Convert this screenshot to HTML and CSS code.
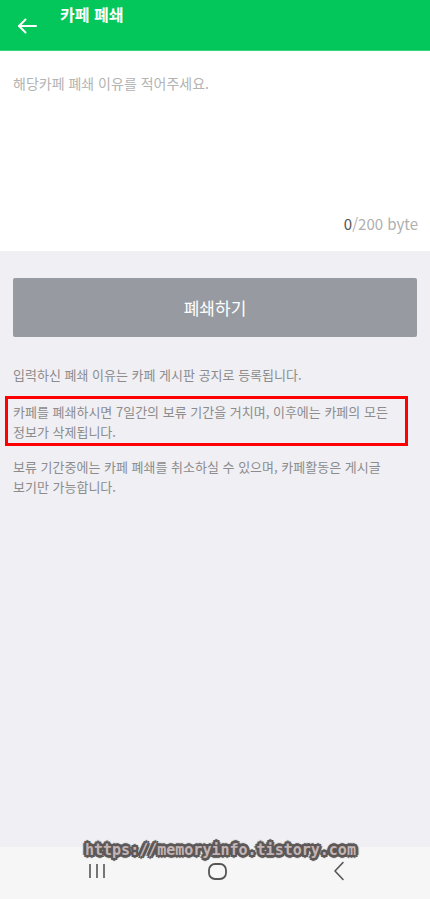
FILE: index.html
```html
<!DOCTYPE html>
<html lang="ko">

<head>
    <meta charset="UTF-8">
    <meta name="viewport" content="width=device-width, initial-scale=1.0">
    <title>카페 폐쇄</title>
    <link rel="stylesheet" href="styles.css">
</head>

<body>
    <div class="screen">
        <header class="topbar">
            <button class="back-btn" aria-label="뒤로">
                <svg width="20" height="16" viewBox="0 0 20 16" fill="none" stroke="#fff" stroke-width="2" stroke-linecap="round" stroke-linejoin="round">
                    <path d="M19 8H2"/>
                    <path d="M8.5 1.5L2 8l6.5 6.5"/>
                </svg>
            </button>
            <h1 class="title">카페 폐쇄</h1>
        </header>

        <section class="reason-box">
            <p class="placeholder">해당카페 폐쇄 이유를 적어주세요.</p>
            <div class="counter"><span class="count-now">0</span>/200 byte</div>
        </section>

        <main class="content">
            <button class="close-btn">폐쇄하기</button>

            <p class="notice">입력하신 폐쇄 이유는 카페 게시판 공지로 등록됩니다.</p>
            <p class="notice boxed">카페를 폐쇄하시면 7일간의 보류 기간을 거치며, 이후에는 카페의 모든<br>정보가 삭제됩니다.</p>
            <p class="notice spaced">보류 기간중에는 카페 폐쇄를 취소하실 수 있으며, 카페활동은 게시글<br>보기만 가능합니다.</p>
        </main>

        <nav class="navbar">
            <span class="nav-icon">
                <svg width="18" height="16" viewBox="0 0 18 16" fill="none" stroke="#555" stroke-width="1.6">
                    <path d="M2 1v14M9 1v14M16 1v14"/>
                </svg>
            </span>
            <span class="nav-icon">
                <svg width="19" height="17" viewBox="0 0 19 17" fill="none" stroke="#555" stroke-width="1.8">
                    <rect x="1" y="1" width="17" height="15" rx="6"/>
                </svg>
            </span>
            <span class="nav-icon">
                <svg width="12" height="20" viewBox="0 0 12 20" fill="none" stroke="#555" stroke-width="1.6" stroke-linecap="round" stroke-linejoin="round">
                    <path d="M10 1.5L2 10l8 8.5"/>
                </svg>
            </span>
        </nav>

        <div class="watermark">https://memoryinfo.tistory.com</div>
    </div>
</body>

</html>
```

FILE: styles.css
```css
* {
    box-sizing: border-box;
}

body {
    margin: 0;
    font-family: "Noto Sans CJK KR", "Noto Sans", sans-serif;
    background-color: #efeff4;
}

.screen {
    position: relative;
    height: 899px;
    display: flex;
    flex-direction: column;
}

.topbar {
    height: 51px;
    background-color: #03c75a;
    display: flex;
    align-items: flex-start;
    border-bottom: 1px solid #35d57c;
}

.back-btn {
    width: 52px;
    height: 50px;
    padding: 1px 0 0 1px;
    background: none;
    border: none;
    display: flex;
    align-items: center;
    justify-content: center;
}

.title {
    margin: 0;
    padding-top: 3px;
    color: #fff;
    font-size: 16px;
    font-weight: 700;
    line-height: 22px;
    margin-left: 8px;
}

.reason-box {
    height: 200px;
    background-color: #fff;
    padding: 21px 12px 16px 13px;
    display: flex;
    flex-direction: column;
    justify-content: space-between;
}

.placeholder {
    margin: 0;
    color: #b3b3b3;
    font-size: 14px;
    line-height: 22px;
}

.counter {
    text-align: right;
    color: #b0b0b0;
    font-size: 15px;
    line-height: 22px;
}

.count-now {
    color: #555;
}

.content {
    flex: 1;
    padding: 27px 13px 0;
}

.close-btn {
    display: block;
    width: 100%;
    height: 59px;
    background-color: #979ba1;
    color: #fff;
    border: none;
    border-radius: 2px;
    font-family: inherit;
    font-size: 17px;
}

.notice {
    margin: 0;
    color: #8c8c8c;
    font-size: 13px;
    line-height: 20px;
}

.content .notice:first-of-type {
    margin-top: 28px;
}

.boxed {
    margin: 11px 9px 0 -8px;
    border: 3px solid #ff0000;
    padding: 3px 5px 1px 5px;
}

.spaced {
    margin-top: 11px;
}

.navbar {
    height: 52px;
    background-color: #f6f6f6;
    display: flex;
    align-items: center;
    justify-content: space-around;
    padding: 0 30px 4px 36px;
}

.nav-icon {
    display: flex;
    align-items: center;
    justify-content: center;
    width: 40px;
}

.watermark {
    position: absolute;
    left: 85px;
    top: 838px;
    font-family: "DejaVu Sans Mono", monospace;
    font-weight: 700;
    font-size: 15px;
    line-height: 24px;
    color: #c4b4b4;
    text-shadow:
        2px 0 0 #5c5858, -2px 0 0 #5c5858, 0 2px 0 #5c5858, 0 -2px 0 #5c5858,
        2px 2px 0 #5c5858, -2px -2px 0 #5c5858, 2px -2px 0 #5c5858, -2px 2px 0 #5c5858,
        3px 0 1px #5c5858, -3px 0 1px #5c5858, 0 3px 1px #5c5858, 0 -3px 1px #5c5858;
}
```
